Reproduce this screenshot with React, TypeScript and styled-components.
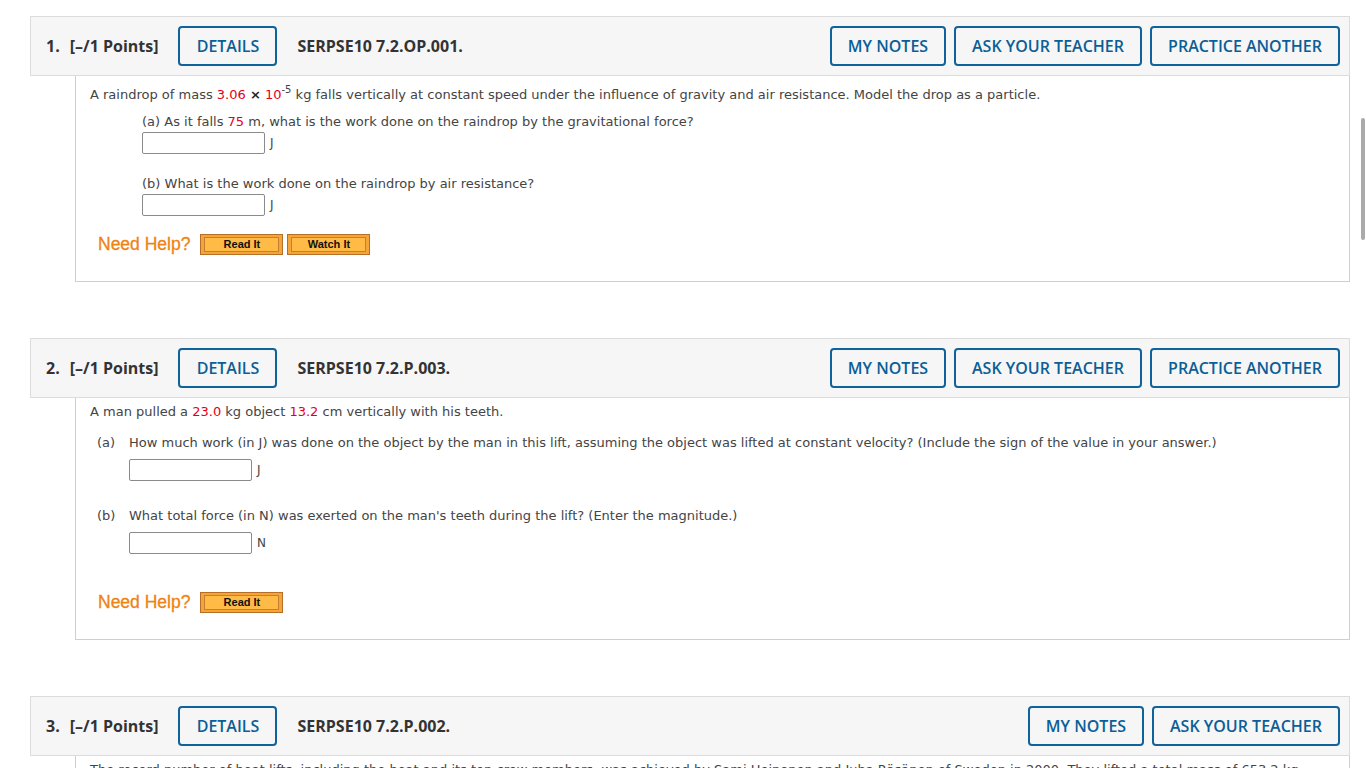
import React from 'react';
import styled, { createGlobalStyle } from 'styled-components';

const GlobalStyle = createGlobalStyle`
  html, body {
    margin: 0;
    padding: 0;
    background: #fff;
    overflow: hidden;
  }
`;

const Page = styled.div`
  padding: 16px 16px 0 30px;
  display: flex;
  flex-direction: column;
  gap: 56px;
  height: 768px;
  box-sizing: border-box;
`;

const Question = styled.section`
  display: flex;
  flex-direction: column;
`;

const Header = styled.div`
  height: 60px;
  box-sizing: border-box;
  border: 1px solid #dcdcdc;
  background: #f6f6f6;
  display: flex;
  align-items: center;
  padding: 0 9px 0 15px;
  font-family: 'Open Sans', sans-serif;
  font-size: 16px;
  color: #333;
`;

const Num = styled.span`
  font-weight: 700;
  margin-right: 10px;
`;

const Points = styled.span`
  font-weight: 700;
  margin-right: 20px;
`;

const Code = styled.span`
  font-weight: 700;
  margin-left: 20px;
`;

const Actions = styled.div`
  margin-left: auto;
  display: flex;
  gap: 8px;
`;

const OutlineButton = styled.button<{ $w: number }>`
  width: ${(p) => p.$w}px;
  height: 40px;
  box-sizing: border-box;
  border: 2px solid #10639a;
  border-radius: 4px;
  background: transparent;
  color: #0b5e96;
  font-family: 'Open Sans', sans-serif;
  font-size: 16px;
  font-weight: 600;
  padding: 0;
`;

const Body = styled.div<{ $h: number }>`
  margin-left: 45px;
  height: ${(p) => p.$h}px;
  box-sizing: border-box;
  border: 1px solid #cfcfcf;
  border-top: none;
  padding: 0 14px;
  font-family: 'DejaVu Sans', sans-serif;
  font-size: 13px;
  color: #444;
  overflow: hidden;
`;

const Intro = styled.p<{ $top: number }>`
  margin: ${(p) => p.$top}px 0 0;
  line-height: 16px;
  white-space: nowrap;
`;

const Red = styled.span`
  color: #e2001a;
`;

const Sup = styled.sup`
  font-size: 10px;
  line-height: 0;
  vertical-align: 6px;
`;

const Times = styled.span`
  color: #222;
  font-weight: 700;
`;

const Part = styled.div<{ $indent: number; $top: number }>`
  margin: ${(p) => p.$top}px 0 0 ${(p) => p.$indent}px;
`;

const Label = styled.div`
  line-height: 16px;
  display: flex;
  white-space: pre;
`;

const Letter = styled.span`
  width: 32px;
  margin-left: -32px;
`;

const AnswerRow = styled.div<{ $top: number }>`
  display: flex;
  align-items: center;
  gap: 5px;
  margin-top: ${(p) => p.$top}px;
  font-size: 12px;
`;

const Input = styled.input`
  width: 123px;
  height: 22px;
  box-sizing: border-box;
  border: 1px solid #8a8a8a;
  border-radius: 2px;
  margin: 0;
`;

const HelpRow = styled.div<{ $top: number }>`
  display: flex;
  align-items: center;
  margin: ${(p) => p.$top}px 0 0 8px;
`;

const HelpText = styled.span`
  font-family: 'Liberation Sans', Arial, sans-serif;
  font-size: 17.5px;
  color: #ee8311;
  margin-right: 10px;
  -webkit-text-stroke: 0.3px #ee8311;
`;

const HelpButton = styled.button`
  width: 83px;
  height: 21px;
  box-sizing: border-box;
  padding: 2px 3px;
  margin-right: 4px;
  border: 1px solid #b56f27;
  background: #f6a43a;
  display: flex;
  cursor: pointer;
`;

const HelpInner = styled.span`
  flex: 1;
  border: 1px solid #c47f33;
  background: #ffbb45;
  font-family: 'Liberation Sans', Arial, sans-serif;
  font-size: 11px;
  font-weight: 700;
  color: #111;
  line-height: 13px;
`;

const Scroll = styled.div`
  position: fixed;
  right: 1px;
  top: 118px;
  width: 4px;
  height: 122px;
  background: #aaa;
  border-radius: 2px;
`;

function QHeader({
  n,
  code,
  actions,
}: {
  n: number;
  code: string;
  actions: [string, number][];
}) {
  return (
    <Header>
      <Num>{n}.</Num>
      <Points>[–/1 Points]</Points>
      <OutlineButton $w={99}>DETAILS</OutlineButton>
      <Code>{code}</Code>
      <Actions>
        {actions.map(([label, w]) => (
          <OutlineButton key={label} $w={w}>
            {label}
          </OutlineButton>
        ))}
      </Actions>
    </Header>
  );
}

const allActions: [string, number][] = [
  ['MY NOTES', 116],
  ['ASK YOUR TEACHER', 188],
  ['PRACTICE ANOTHER', 190],
];

export default function App() {
  return (
    <>
      <GlobalStyle />
      <Page>
        <Question>
          <QHeader n={1} code="SERPSE10 7.2.OP.001." actions={allActions} />
          <Body $h={206}>
            <Intro $top={11}>
              A raindrop of mass <Red>3.06</Red> <Times>×</Times> <Red>10</Red>
              <Sup>-5</Sup> kg falls vertically at constant speed under the influence of
              gravity and air resistance. Model the drop as a particle.
            </Intro>
            <Part $indent={52} $top={11}>
              <Label>
                (a) As it falls <Red>75</Red> m, what is the work done on the raindrop by
                the gravitational force?
              </Label>
              <AnswerRow $top={2}>
                <Input />
                <span>J</span>
              </AnswerRow>
            </Part>
            <Part $indent={52} $top={22}>
              <Label>(b) What is the work done on the raindrop by air resistance?</Label>
              <AnswerRow $top={2}>
                <Input />
                <span>J</span>
              </AnswerRow>
            </Part>
            <HelpRow $top={18}>
              <HelpText>Need Help?</HelpText>
              <HelpButton>
                <HelpInner>Read It</HelpInner>
              </HelpButton>
              <HelpButton>
                <HelpInner>Watch It</HelpInner>
              </HelpButton>
            </HelpRow>
          </Body>
        </Question>

        <Question>
          <QHeader n={2} code="SERPSE10 7.2.P.003." actions={allActions} />
          <Body $h={242}>
            <Intro $top={6}>
              A man pulled a <Red>23.0</Red> kg object <Red>13.2</Red> cm vertically with
              his teeth.
            </Intro>
            <Part $indent={39} $top={15}>
              <Label>
                <Letter>(a)</Letter>
                How much work (in J) was done on the object by the man in this lift,
                assuming the object was lifted at constant velocity? (Include the sign of
                the value in your answer.)
              </Label>
              <AnswerRow $top={8}>
                <Input />
                <span>J</span>
              </AnswerRow>
            </Part>
            <Part $indent={39} $top={27}>
              <Label>
                <Letter>(b)</Letter>
                What total force (in N) was exerted on the man's teeth during the lift?
                (Enter the magnitude.)
              </Label>
              <AnswerRow $top={8}>
                <Input />
                <span>N</span>
              </AnswerRow>
            </Part>
            <HelpRow $top={38}>
              <HelpText>Need Help?</HelpText>
              <HelpButton>
                <HelpInner>Read It</HelpInner>
              </HelpButton>
            </HelpRow>
          </Body>
        </Question>

        <Question>
          <QHeader
            n={3}
            code="SERPSE10 7.2.P.002."
            actions={allActions.slice(0, 2)}
          />
          <Body $h={60}>
            <Intro $top={6}>
              The record number of boat lifts, including the boat and its ten crew
              members, was achieved by Sami Heinonen and Juha Räsänen of Sweden in 2000.
              They lifted a total mass of 653.2 kg
            </Intro>
          </Body>
        </Question>
      </Page>
      <Scroll />
    </>
  );
}
